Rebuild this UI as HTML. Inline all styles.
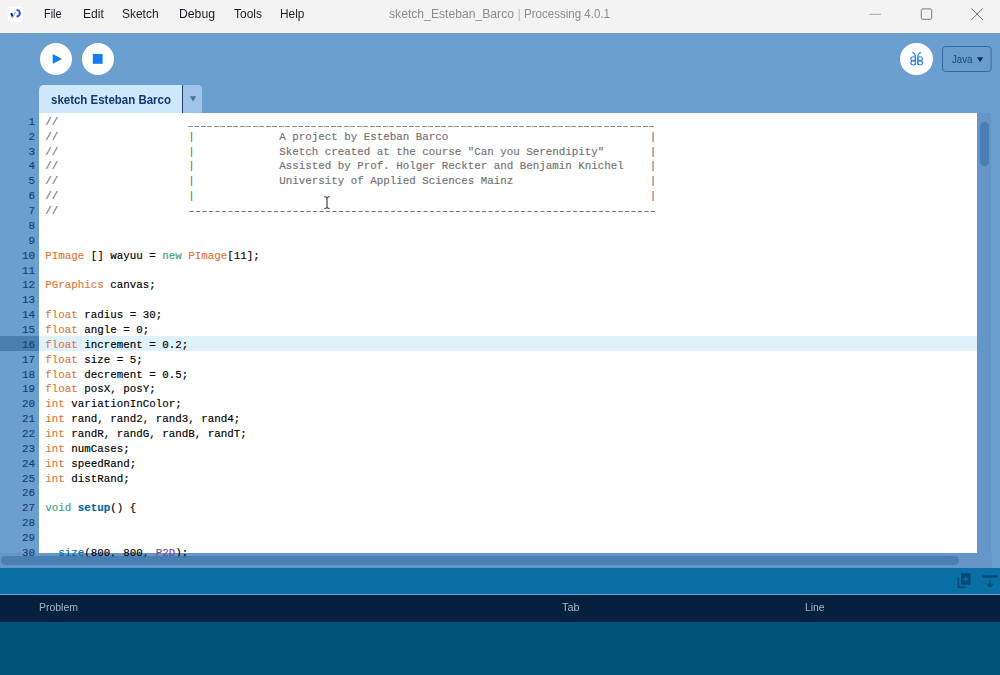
<!DOCTYPE html>
<html><head><meta charset="utf-8"><title>sketch_Esteban_Barco | Processing 4.0.1</title>
<style>
html,body{margin:0;padding:0;}
body{width:1000px;height:675px;overflow:hidden;position:relative;background:#6b9fcf;font-family:"Liberation Sans", "DejaVu Sans", sans-serif;}
.abs{position:absolute;}
#titlebar{left:0;top:0;width:1000px;height:32.5px;background:#f3f3f3;}
.menu{position:absolute;top:6px;height:16px;line-height:16px;font-size:12.6px;color:#1b1b2b;white-space:pre;transform-origin:0 50%;}
.title{position:absolute;top:6px;height:16px;line-height:16px;font-size:12.6px;color:#8c8c8c;white-space:pre;transform-origin:0 50%;}
#toolbar{left:0;top:32.5px;width:1000px;height:80.5px;background:#6b9fcf;}
.circ{position:absolute;width:32.4px;height:32.4px;border-radius:50%;background:#fff;}
#tab{left:39px;top:85.2px;width:143px;height:27.8px;background:#cde8fc;border-radius:5px 0 0 0;}
#tabtext{position:absolute;left:12px;top:6.5px;line-height:16px;font-weight:bold;font-size:12px;color:#15376a;white-space:pre;transform-origin:0 50%;}
#tabsep{left:181.7px;top:85.2px;width:1.6px;height:27.8px;background:#223f66;}
#tabarrow{left:183.2px;top:85.2px;width:18.5px;height:27.8px;background:#9fc3e9;border-radius:0 4px 0 0;}
#edbg{left:39px;top:113px;width:937.7px;height:440.4px;background:#fff;}
#editor{left:39px;top:113px;width:937.7px;height:454.5px;overflow:hidden;}
#gutter{left:0;top:113px;width:39px;height:454.5px;overflow:hidden;}
.ln{-webkit-text-stroke:0.15px #183d72;position:absolute;left:0;width:35px;text-align:right;height:14.862px;line-height:14.862px;font-family:"Liberation Mono", "DejaVu Sans Mono", monospace;font-size:10.8333px;color:#183d72;white-space:pre;}
.cl{-webkit-text-stroke:0.15px;position:absolute;left:0;width:938px;height:14.862px;line-height:14.862px;font-family:"Liberation Mono", "DejaVu Sans Mono", monospace;font-size:10.8333px;color:#000;white-space:pre;}
.cl span.seg{position:absolute;top:0;}
.c{color:#727272;} .o{color:#d9783c;} .t{color:#40a086;} .b{color:#006699;} .p{color:#7d4793;}
.hy{text-shadow:0.55px 0 0 currentColor,-0.55px 0 0 currentColor;}
.us{text-shadow:0 0.3px 0 currentColor;}
.dash{-webkit-mask-image:repeating-linear-gradient(90deg,#000 0,#000 4.7px,transparent 4.7px,transparent 6.5px);mask-image:repeating-linear-gradient(90deg,#000 0,#000 4.7px,transparent 4.7px,transparent 6.5px);display:inline-block;}
#vtrack{left:976.7px;top:113px;width:14.8px;height:454.6px;background:#6696c8;}
#vthumb{left:980px;top:122px;width:8.6px;height:44px;border-radius:4.3px;background:#4a7fb5;}
#htrack{left:0;top:553.4px;width:991.5px;height:14.2px;background:#6696c8;}
#hthumb{left:0.7px;top:556px;width:958px;height:9.2px;border-radius:4.6px;background:rgba(68,122,174,0.82);}
#status{left:0;top:568px;width:1000px;height:26.4px;background:#0a6fa5;}
#thead{left:0;top:594.6px;width:1000px;height:28px;background:#04223f;}
.th{position:absolute;top:4.5px;line-height:16px;font-size:11.7px;color:#a4b4c4;white-space:pre;transform-origin:0 50%;}
#bottom{left:0;top:622.4px;width:1000px;height:52.6px;background:#04517a;}
</style></head><body>

<div id="titlebar" class="abs">
<svg class="abs" style="left:4px;top:3px" width="24" height="24" viewBox="4 3 24 24"><rect x="8.1" y="7" width="15.6" height="15.8" rx="2.6" fill="#e4e6ec"/><rect x="7.7" y="6.4" width="15.7" height="16" rx="2.6" fill="#fff"/><path d="M11.2 13.2 L12.6 16.6" fill="none" stroke="#0c1a6e" stroke-width="2" stroke-linecap="butt"/><path d="M11.9 18.1 L15.6 12.2" fill="none" stroke="#6aa8f0" stroke-width="1.2"/><path d="M16.5 10 A3.4 3.25 0 0 1 16.5 16.5" fill="none" stroke="#1f58e2" stroke-width="2"/></svg>
<div class="menu fit" style="transform:scaleX(0.8671);left:44.4px">File</div>
<div class="menu fit" style="transform:scaleX(0.9584);left:82.6px">Edit</div>
<div class="menu fit" style="transform:scaleX(0.9503);left:122px">Sketch</div>
<div class="menu fit" style="transform:scaleX(0.9697);left:179px">Debug</div>
<div class="menu fit" style="transform:scaleX(0.9522);left:233.6px">Tools</div>
<div class="menu fit" style="transform:scaleX(0.9419);left:280px">Help</div>
<div class="title fit" style="transform:scaleX(0.9650);left:389.2px">sketch_Esteban_Barco</div>
<div class="title" style="left:517.6px;color:#9fc0e0">|</div>
<div class="title fit" style="transform:scaleX(0.9167);left:524.2px">Processing 4.0.1</div>
<svg class="abs" style="left:860px;top:0" width="140" height="32" viewBox="0 0 140 32">
<line x1="9.5" y1="14.3" x2="21" y2="14.3" stroke="#a6a6a6" stroke-width="1"/>
<rect x="61.3" y="8.9" width="10.4" height="10.4" rx="1.6" fill="none" stroke="#777" stroke-width="1"/>
<path d="M111.4 8.4 L122.8 19.9 M122.8 8.4 L111.4 19.9" stroke="#6a6a6a" stroke-width="1" fill="none"/>
</svg>
</div>
<div id="toolbar" class="abs"></div>
<div class="circ" style="left:39.7px;top:42.6px"></div>
<div class="circ" style="left:81.6px;top:42.6px"></div>
<div class="circ" style="left:900.4px;top:42.5px"></div>
<svg class="abs" style="left:0;top:33px" width="1000" height="52" viewBox="0 33 1000 52">
<path d="M52.7 54 L62 58.9 L52.7 63.8 Z" fill="#0f7df0"/>
<rect x="92.8" y="54" width="9.8" height="9.8" fill="#0f7df0"/>
<g fill="none" stroke="#2f86de" stroke-width="1.15" stroke-linecap="round">
<path d="M912.7 52.5 Q915.5 53.6 915.5 57 V64.3"/><ellipse cx="913.2" cy="58.7" rx="2.3" ry="1.95"/><ellipse cx="913.2" cy="62.8" rx="2.3" ry="2.15"/>
<path d="M920.6 52.5 Q917.8 53.6 917.8 57 V64.3"/><ellipse cx="920.1" cy="58.7" rx="2.3" ry="1.95"/><ellipse cx="920.1" cy="62.8" rx="2.3" ry="2.15"/>
</g>
<rect x="942.5" y="46.5" width="48.6" height="25" rx="3" fill="#6a9ccc" stroke="#2f6aa6" stroke-width="1"/>
<path d="M977 57.2 H983.2 L980.1 62.2 Z" fill="#0f2e5c"/>
</svg>
<div class="abs fit" style="transform:scaleX(0.8629);left:951.8px;top:50.5px;line-height:16px;font-size:11.2px;color:#1a4676;white-space:pre;transform-origin:0 50%">Java</div>
<div id="tab" class="abs"><div id="tabtext" class="fit" style="transform:scaleX(0.9570);left:12px">sketch Esteban Barco</div></div>
<div id="tabsep" class="abs"></div><div id="tabarrow" class="abs"></div>
<svg class="abs" style="left:183px;top:85px" width="19" height="28" viewBox="0 0 19 28"><path d="M6.9 11.2 H13.1 L10 16.4 Z" fill="#506d8f"/></svg>
<div id="edbg" class="abs"></div><div id="vtrack" class="abs"></div><div id="htrack" class="abs"></div>
<div id="editor" class="abs">
<div class="abs" style="left:0;top:223.40px;width:938px;height:14.862px;background:#dff1fb"></div>
<div class="cl" style="top:1.90px"><span class="seg" style="left:6.30px"><span class="c">//</span></span><span class="seg" style="left:149.30px"><span class="c dash us" style="position:relative;top:0.8px">________________________________________________________________________</span></span></div>
<div class="cl" style="top:16.76px"><span class="seg" style="left:6.30px"><span class="c">//</span></span><span class="seg" style="left:149.30px"><span class="c">|</span></span><span class="seg" style="left:240.30px"><span class="c">A project by Esteban Barco</span></span><span class="seg" style="left:610.80px"><span class="c">|</span></span></div>
<div class="cl" style="top:31.62px"><span class="seg" style="left:6.30px"><span class="c">//</span></span><span class="seg" style="left:149.30px"><span class="c">|</span></span><span class="seg" style="left:240.30px"><span class="c">Sketch created at the course &quot;Can you Serendipity&quot;</span></span><span class="seg" style="left:610.80px"><span class="c">|</span></span></div>
<div class="cl" style="top:46.49px"><span class="seg" style="left:6.30px"><span class="c">//</span></span><span class="seg" style="left:149.30px"><span class="c">|</span></span><span class="seg" style="left:240.30px"><span class="c">Assisted by Prof. Holger Reckter and Benjamin Knichel</span></span><span class="seg" style="left:610.80px"><span class="c">|</span></span></div>
<div class="cl" style="top:61.35px"><span class="seg" style="left:6.30px"><span class="c">//</span></span><span class="seg" style="left:149.30px"><span class="c">|</span></span><span class="seg" style="left:240.30px"><span class="c">University of Applied Sciences Mainz</span></span><span class="seg" style="left:610.80px"><span class="c">|</span></span></div>
<div class="cl" style="top:76.21px"><span class="seg" style="left:6.30px"><span class="c">//</span></span><span class="seg" style="left:149.30px"><span class="c">|</span></span><span class="seg" style="left:610.80px"><span class="c">|</span></span></div>
<div class="cl" style="top:91.07px"><span class="seg" style="left:6.30px"><span class="c">//</span></span><span class="seg" style="left:149.30px"><span class="c hy">------------------------------------------------------------------------</span></span></div>
<div class="cl" style="top:105.93px"></div>
<div class="cl" style="top:120.80px"></div>
<div class="cl" style="top:135.66px"><span class="seg" style="left:6.30px"><span class="o">PImage</span> [] wayuu = <span class="t">new</span> <span class="o">PImage</span>[11];</span></div>
<div class="cl" style="top:150.52px"></div>
<div class="cl" style="top:165.38px"><span class="seg" style="left:6.30px"><span class="o">PGraphics</span> canvas;</span></div>
<div class="cl" style="top:180.24px"></div>
<div class="cl" style="top:195.11px"><span class="seg" style="left:6.30px"><span class="o">float</span> radius = 30;</span></div>
<div class="cl" style="top:209.97px"><span class="seg" style="left:6.30px"><span class="o">float</span> angle = 0;</span></div>
<div class="cl" style="top:224.83px"><span class="seg" style="left:6.30px"><span class="o">float</span> increment = 0.2;</span></div>
<div class="cl" style="top:239.69px"><span class="seg" style="left:6.30px"><span class="o">float</span> size = 5;</span></div>
<div class="cl" style="top:254.55px"><span class="seg" style="left:6.30px"><span class="o">float</span> decrement = 0.5;</span></div>
<div class="cl" style="top:269.42px"><span class="seg" style="left:6.30px"><span class="o">float</span> posX, posY;</span></div>
<div class="cl" style="top:284.28px"><span class="seg" style="left:6.30px"><span class="o">int</span> variationInColor;</span></div>
<div class="cl" style="top:299.14px"><span class="seg" style="left:6.30px"><span class="o">int</span> rand, rand2, rand3, rand4;</span></div>
<div class="cl" style="top:314.00px"><span class="seg" style="left:6.30px"><span class="o">int</span> randR, randG, randB, randT;</span></div>
<div class="cl" style="top:328.86px"><span class="seg" style="left:6.30px"><span class="o">int</span> numCases;</span></div>
<div class="cl" style="top:343.73px"><span class="seg" style="left:6.30px"><span class="o">int</span> speedRand;</span></div>
<div class="cl" style="top:358.59px"><span class="seg" style="left:6.30px"><span class="o">int</span> distRand;</span></div>
<div class="cl" style="top:373.45px"></div>
<div class="cl" style="top:388.31px"><span class="seg" style="left:6.30px"><span class="t">void</span> <span class="b" style="font-weight:bold">setup</span>() {</span></div>
<div class="cl" style="top:403.17px"></div>
<div class="cl" style="top:418.04px"></div>
<div class="cl" style="top:432.90px"><span class="seg" style="left:6.30px">  <span class="b">size</span>(800, 800, <span class="p">P2D</span>);</span></div>
</div>
<div id="gutter" class="abs">
<div class="abs" style="left:0;top:223.40px;width:39px;height:14.862px;background:#4c7eb3"></div>
<div class="ln" style="top:1.90px">1</div>
<div class="ln" style="top:16.76px">2</div>
<div class="ln" style="top:31.62px">3</div>
<div class="ln" style="top:46.49px">4</div>
<div class="ln" style="top:61.35px">5</div>
<div class="ln" style="top:76.21px">6</div>
<div class="ln" style="top:91.07px">7</div>
<div class="ln" style="top:105.93px">8</div>
<div class="ln" style="top:120.80px">9</div>
<div class="ln" style="top:135.66px">10</div>
<div class="ln" style="top:150.52px">11</div>
<div class="ln" style="top:165.38px">12</div>
<div class="ln" style="top:180.24px">13</div>
<div class="ln" style="top:195.11px">14</div>
<div class="ln" style="top:209.97px">15</div>
<div class="ln" style="top:224.83px">16</div>
<div class="ln" style="top:239.69px">17</div>
<div class="ln" style="top:254.55px">18</div>
<div class="ln" style="top:269.42px">19</div>
<div class="ln" style="top:284.28px">20</div>
<div class="ln" style="top:299.14px">21</div>
<div class="ln" style="top:314.00px">22</div>
<div class="ln" style="top:328.86px">23</div>
<div class="ln" style="top:343.73px">24</div>
<div class="ln" style="top:358.59px">25</div>
<div class="ln" style="top:373.45px">26</div>
<div class="ln" style="top:388.31px">27</div>
<div class="ln" style="top:403.17px">28</div>
<div class="ln" style="top:418.04px">29</div>
<div class="ln" style="top:432.90px">30</div>
</div>
<svg class="abs" style="left:320px;top:194px" width="14" height="17" viewBox="320 194 14 17"><path d="M324.3 196.6 Q326.4 196.7 327 198 Q327.6 196.7 329.7 196.6 M324.3 208.6 Q326.4 208.5 327 207.2 Q327.6 208.5 329.7 208.6 M327 197.6 V207.6" stroke="#4d4d4d" stroke-width="1.25" fill="none"/></svg>
<div id="vthumb" class="abs"></div><div id="hthumb" class="abs"></div>
<div id="status" class="abs"></div>
<svg class="abs" style="left:950px;top:566px" width="50" height="30" viewBox="0 0 50 30">
<rect x="11" y="7.2" width="9.6" height="11.6" fill="#0c4877"/>
<path d="M15.8 10.4 V15.6 M13.2 13 H18.4" stroke="#0a6fa5" stroke-width="1.4"/>
<path d="M8.4 12 V21.3 H15.6" stroke="#0c4877" stroke-width="1.6" fill="none"/>
<rect x="32.3" y="9.3" width="15.2" height="2.4" fill="#0c4877"/>
<path d="M40 14.4 V20.6 M37.3 17.9 L40 20.8 L42.9 17.9" stroke="#0c4877" stroke-width="1.4" fill="none"/>
</svg>
<div id="thead" class="abs">
<div class="th fit" style="transform:scaleX(0.8959);left:39px">Problem</div>
<div class="th fit" style="transform:scaleX(0.9287);left:562px">Tab</div>
<div class="th fit" style="transform:scaleX(0.8820);left:805px">Line</div>
</div>
<div id="bottom" class="abs"></div>
</body></html>
